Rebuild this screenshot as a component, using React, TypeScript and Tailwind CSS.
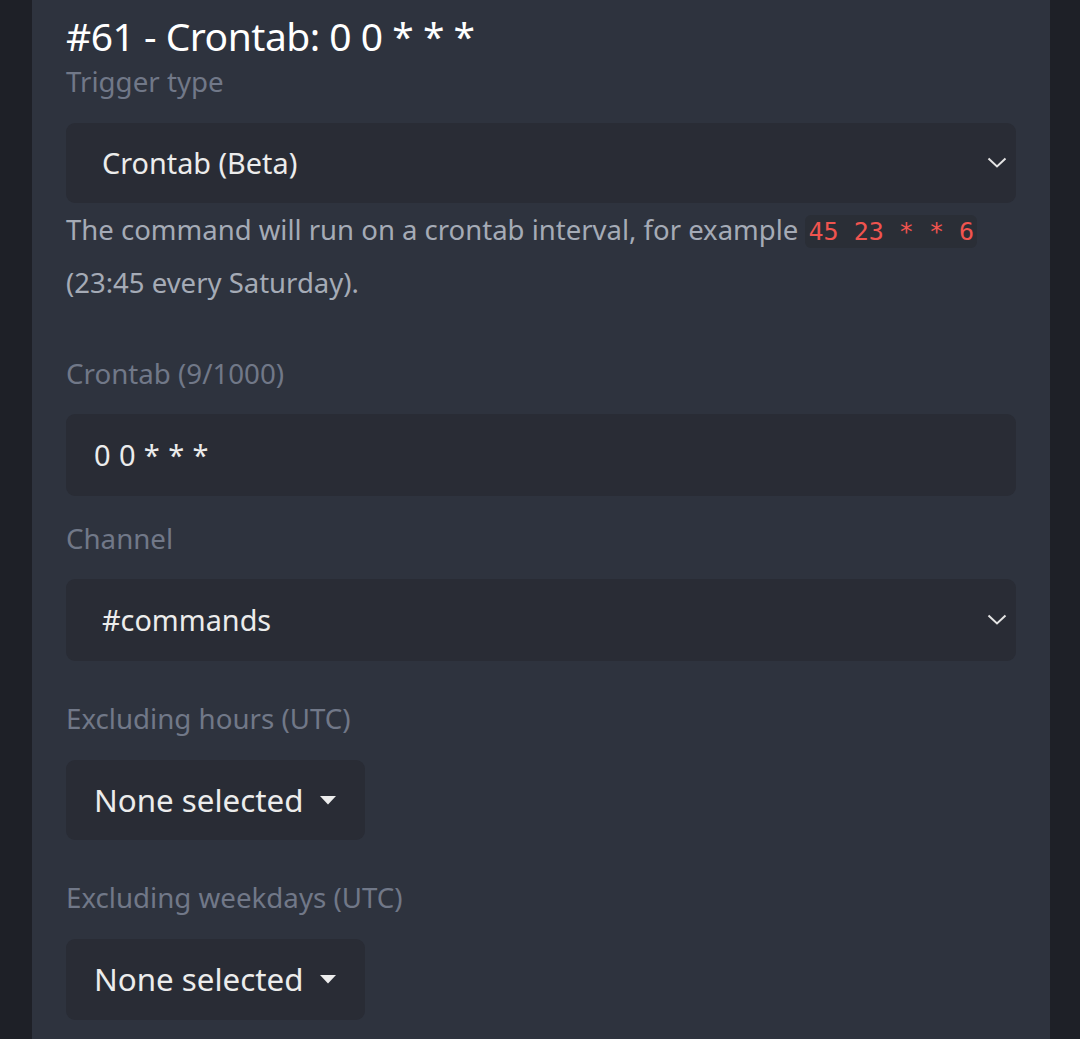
import React from "react";

function Chevron() {
  return (
    <svg width="20" height="12" viewBox="0 0 20 12" className="shrink-0">
      <path d="M1.5 1.5 L10 9.5 L18.5 1.5" fill="none" stroke="#e4e4e4" strokeWidth="2" />
    </svg>
  );
}

function Caret() {
  return (
    <svg width="16" height="9" viewBox="0 0 16 9" className="shrink-0">
      <path d="M0 0 L16 0 L8 8.5 Z" fill="#ededed" />
    </svg>
  );
}

function Label({ children, className = "" }: { children: React.ReactNode; className?: string }) {
  return (
    <div className={`h-[36px] leading-[32px] text-[27.7px] text-[#717888] ${className}`}>{children}</div>
  );
}

function Select({ value, className = "" }: { value: string; className?: string }) {
  return (
    <div
      className={`h-[81px] rounded-[9px] bg-[#292c35] flex items-center justify-between pl-[36px] pr-[9px] ${className}`}
    >
      <span className="text-[28.8px] text-[#ececec]">{value}</span>
      <Chevron />
    </div>
  );
}

function MultiButton({ className = "" }: { className?: string }) {
  return (
    <div
      className={`h-[81px] w-[299px] rounded-[9px] bg-[#292c35] flex items-center pl-[28px] gap-[17px] ${className}`}
    >
      <span className="text-[31.3px] text-[#ececec]">None selected</span>
      <Caret />
    </div>
  );
}

export default function App() {
  return (
    <div
      className="w-[1080px] h-[1039px] bg-[#1e2027] overflow-hidden flex"
      style={{ fontFamily: '"Noto Sans", "Open Sans", sans-serif' }}
    >
      <div className="ml-[32px] w-[1018px] h-full bg-[#2e333e] pl-[34px] pr-[34px] pt-[12px]">
        <div className="h-[48px] leading-[48px] text-[39px] text-white tracking-[-0.5px]">
          #61 - Crontab: 0 0 * * *
        </div>
        <Label className="mt-[5px]">Trigger type</Label>
        <Select value="Crontab (Beta)" className="mt-[22px] !h-[80px]" />
        <div className="text-[27.5px] leading-[53px] text-[#a5abb6]">
          The command will run on a crontab interval, for example{" "}
          <code
            className="bg-[#2a2e36] text-[#f0544f] rounded-[6px] px-[3px] py-[2px] text-[25px] leading-none"
            style={{ fontFamily: '"DejaVu Sans Mono", "Liberation Mono", monospace' }}
          >
            45 23 * * 6
          </code>
          <br />
          (23:45 every Saturday).
        </div>
        <Label className="mt-[48px]">Crontab (9/1000)</Label>
        <div className="mt-[21px] h-[82px] rounded-[9px] bg-[#292c35] flex items-center pl-[28px]">
          <span className="text-[29px] tracking-[0.4px] text-[#ececec]">0 0 * * *</span>
        </div>
        <Label className="mt-[26px]">Channel</Label>
        <Select value="#commands" className="mt-[21px] !h-[82px]" />
        <Label className="mt-[41px]">Excluding hours (UTC)</Label>
        <MultiButton className="mt-[22px] !h-[80px]" />
        <Label className="mt-[41px]">Excluding weekdays (UTC)</Label>
        <MultiButton className="mt-[22px]" />
      </div>
    </div>
  );
}
